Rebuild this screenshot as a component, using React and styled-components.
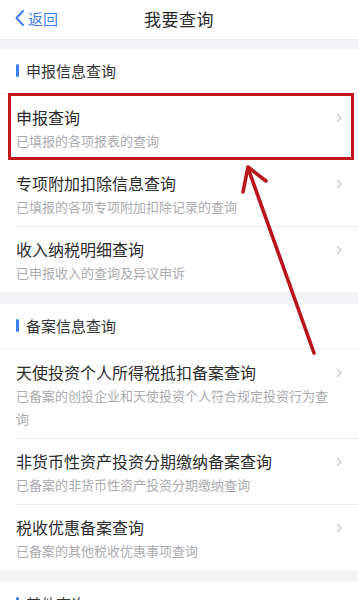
import React from 'react';
import styled, { createGlobalStyle } from 'styled-components';

const GlobalStyle = createGlobalStyle`
  html, body {
    margin: 0;
    padding: 0;
    background: #f3f3f5;
    font-family: "Noto Sans CJK SC", "Noto Sans", sans-serif;
  }
`;

const sections = [
  {
    title: '申报信息查询',
    items: [
      { title: '申报查询', sub: '已填报的各项报表的查询', marked: true },
      { title: '专项附加扣除信息查询', sub: '已填报的各项专项附加扣除记录的查询' },
      { title: '收入纳税明细查询', sub: '已申报收入的查询及异议申诉' },
    ],
  },
  {
    title: '备案信息查询',
    items: [
      { title: '天使投资个人所得税抵扣备案查询', sub: '已备案的创投企业和天使投资个人符合规定投资行为查询' },
      { title: '非货币性资产投资分期缴纳备案查询', sub: '已备案的非货币性资产投资分期缴纳查询' },
      { title: '税收优惠备案查询', sub: '已备案的其他税收优惠事项查询' },
    ],
  },
  {
    title: '其他查询',
    items: [],
  },
];

const App = () => {
  return (
    <Page>
      <GlobalStyle />
      <NavBar>
        <BackLink>
          <svg width="11" height="18" viewBox="0 0 11 18">
            <path d="M9 2 L2.5 9 L9 16" fill="none" stroke="#3a7ef0" strokeWidth="2" strokeLinecap="round" strokeLinejoin="round" />
          </svg>
          返回
        </BackLink>
        <NavTitle>我要查询</NavTitle>
      </NavBar>
      {sections.map((s) => (
        <Section key={s.title}>
          <SectionHeader>
            <Bar />
            {s.title}
          </SectionHeader>
          {s.items.map((it) => (
            <Row key={it.title} $marked={it.marked}>
              <RowText>
                <RowTitle>{it.title}</RowTitle>
                <RowSub>{it.sub}</RowSub>
              </RowText>
              <Chevron viewBox="0 0 6 10">
                <path d="M1 1 L5 5 L1 9" fill="none" stroke="#c8c8cc" strokeWidth="1.3" />
              </Chevron>
            </Row>
          ))}
        </Section>
      ))}
      <ArrowLayer viewBox="0 0 358 600" width="358" height="600">
        <g stroke="#b8161b" strokeWidth="3.6" strokeLinecap="round" fill="none" strokeLinejoin="round">
          <line x1="314" y1="353" x2="248" y2="168" />
          <polyline points="243,192 248,167 266,181" />
        </g>
      </ArrowLayer>
    </Page>
  );
};

const Page = styled.div`
  position: relative;
  width: 358px;
  height: 600px;
  overflow: hidden;
  background: #f3f3f5;
`;

const NavBar = styled.div`
  position: relative;
  height: 40px;
  box-sizing: border-box;
  padding-bottom: 3px;
  background: #fff;
  display: flex;
  align-items: center;
  justify-content: center;
  border-bottom: 1px solid #ececee;
  margin-bottom: 9px;
`;

const BackLink = styled.div`
  position: absolute;
  left: 14px;
  top: 0;
  bottom: 3px;
  display: flex;
  align-items: center;
  gap: 3px;
  color: #3a7ef0;
  font-size: 15px;
`;

const NavTitle = styled.div`
  font-size: 17px;
  color: #2a2a2a;
  letter-spacing: 0.5px;
`;

const Section = styled.div`
  background: #fff;
  margin-bottom: 12px;
`;

const SectionHeader = styled.div`
  height: 45px;
  box-sizing: border-box;
  padding: 0 0 1px 16px;
  display: flex;
  align-items: center;
  gap: 7px;
  font-size: 15px;
  color: #333;
  border-bottom: 1px solid #f0f0f2;
`;

const Bar = styled.span`
  width: 3px;
  height: 13px;
  border-radius: 2px;
  background: #3a7ef0;
`;

const Row = styled.div`
  position: relative;
  display: flex;
  align-items: flex-start;
  padding: 11px 16px 8px 16px;

  & + &::before {
    content: '';
    position: absolute;
    top: 0;
    left: 16px;
    right: 0;
    height: 1px;
    background: #eeeef0;
  }

  ${(p) =>
    p.$marked &&
    `
    &::after {
      content: '';
      position: absolute;
      left: 8px;
      right: 4px;
      top: -1px;
      bottom: 0;
      border: 3px solid #c0171c;
    }
  `}
`;

const RowText = styled.div`
  flex: 1;
  display: flex;
  flex-direction: column;
`;

const RowTitle = styled.div`
  font-size: 16px;
  line-height: 24px;
  color: #2b2b2b;
`;

const RowSub = styled.div`
  font-size: 13px;
  line-height: 23px;
  color: #ababae;
  padding-right: 4px;
`;

const Chevron = styled.svg`
  width: 6px;
  height: 10px;
  margin-top: 8px;
`;

const ArrowLayer = styled.svg`
  position: absolute;
  left: 0;
  top: 0;
  pointer-events: none;
`;

export default App;
